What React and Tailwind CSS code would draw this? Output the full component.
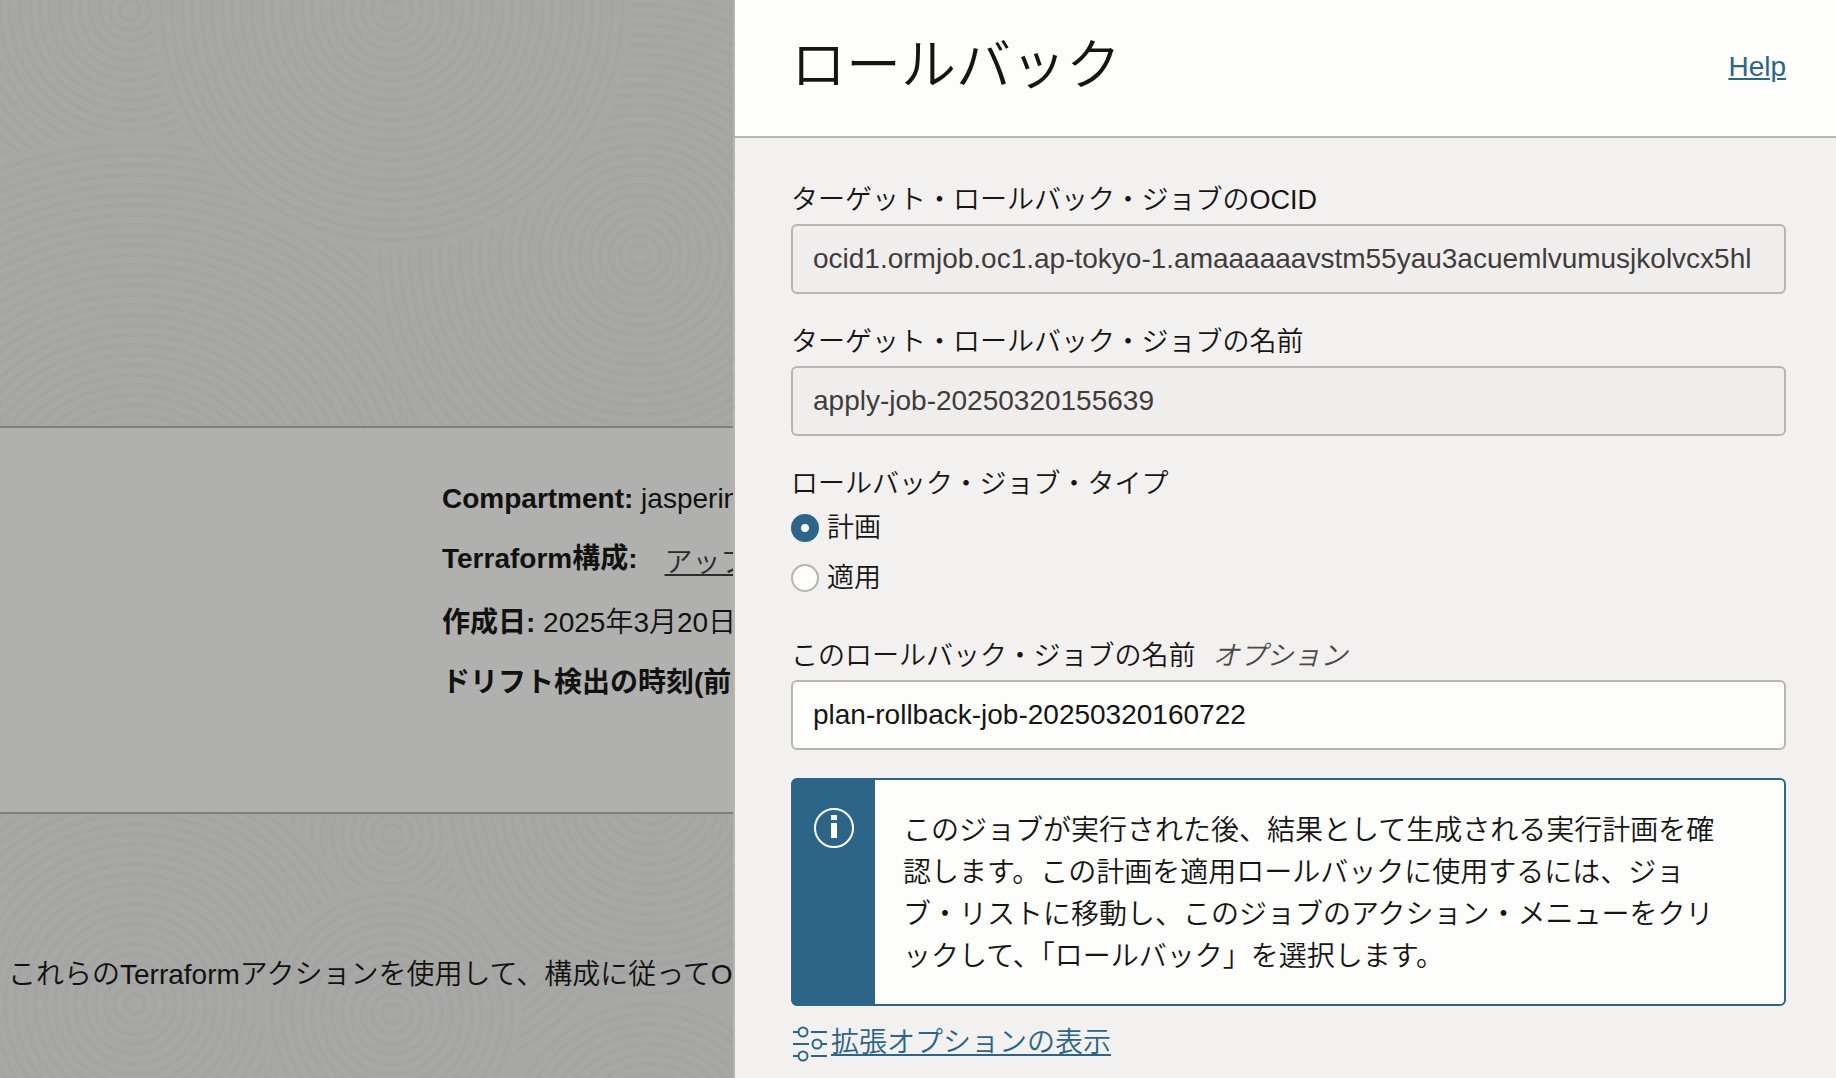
import { useState } from "react";

// Groups of concentric rings, painted back to front
const topRings = [
  { cx: -120, cy: 480, r: 400 },
  { cx: 130, cy: 10, r: 230 },
  { cx: 645, cy: 20, r: 230 },
  { cx: 135, cy: 525, r: 390 },
  { cx: 640, cy: 255, r: 270 },
  { cx: 392, cy: 10, r: 240 },
];

const bottomRings = [
  { cx: 392, cy: 20, r: 260 },
  { cx: 135, cy: 190, r: 240 },
  { cx: 650, cy: -20, r: 210 },
  { cx: 650, cy: 330, r: 150 },
  { cx: 392, cy: 200, r: 130 },
];

function RingTexture({ groups }) {
  return (
    <svg className="absolute inset-0 w-full h-full" aria-hidden="true">
      {groups.map((group, i) => (
        <g key={i} strokeWidth="4" stroke="#a4a4a3">
          <circle cx={group.cx} cy={group.cy} r={group.r} fill="#a7a7a5" stroke="none" />
          {Array.from({ length: Math.floor(group.r / 10) - 1 }, (_, n) => (
            <circle key={n} cx={group.cx} cy={group.cy} r={(n + 1) * 10} fill="none" />
          ))}
        </g>
      ))}
    </svg>
  );
}

function InfoIcon() {
  return (
    <svg width="40" height="40" viewBox="0 0 40 40" fill="none" aria-hidden="true">
      <circle cx="20" cy="20" r="19" stroke="#fff" strokeWidth="2" />
      <path d="M17 7h6v5h-6z M17 15h6v15h-6z" fill="#fff" />
    </svg>
  );
}

function SlidersIcon() {
  return (
    <svg width="36" height="38" viewBox="0 0 36 38" fill="none" stroke="#2c6587" strokeWidth="2" aria-hidden="true">
      <path d="M2 8h5M20 8h16M2 20h16M31 20h5M2 32h5M20 32h16" />
      <circle cx="12" cy="8" r="4.500" />
      <circle cx="26" cy="20" r="4.500" />
      <circle cx="12" cy="32" r="4.500" />
    </svg>
  );
}

function StackDetails() {
  return (
    <main className="min-w-0 overflow-hidden whitespace-nowrap flex flex-col bg-[#a7a7a5] text-[28px] leading-[36px] text-[#11110f]">
      <div className="relative h-[426px]">
        <RingTexture groups={topRings} />
      </div>
      <section className="border-y-2 border-[#7f7f7d] bg-[#b0b0ae] pl-[442px] pt-[49px] pb-[95px]">
        <p className="h-[60px] pt-1">
          <strong>Compartment:</strong> jasperin
        </p>
        <p className="h-[60px] pt-1 flex">
          <strong>Terraform構成:</strong>
          <a href="#config" className="ml-[27px] mt-1 text-[#2b2b2a] underline decoration-2 underline-offset-2">
            アップロード
          </a>
        </p>
        <p className="h-[64px] pt-2">
          <strong>作成日:</strong> 2025年3月20日
        </p>
        <p className="h-[56px] pt-1">
          <strong>ドリフト検出の時刻(前回)</strong>
        </p>
      </section>
      <div className="relative flex-1 pl-2 pt-[143px]">
        <RingTexture groups={bottomRings} />
        <p className="relative">これらのTerraformアクションを使用して、構成に従ってOCI</p>
      </div>
    </main>
  );
}

function Field({ id, label, optional, disabled, value, onChange }) {
  return (
    <div>
      <label htmlFor={id} className="block mb-[6px] text-[27px] leading-[36px]">
        {label}
        {optional && <em className="ml-[17px] text-[#4a4947]">オプション</em>}
      </label>
      <input
        id={id}
        type="text"
        disabled={disabled}
        value={value}
        onChange={onChange}
        className="block w-full h-[70px] px-5 rounded-md border-2 border-[#bab4af] bg-[#fdfdfc] text-[28px] disabled:bg-[#f0eeed] disabled:text-[#3e3d3b]"
      />
    </div>
  );
}

function RadioOption({ label, value, checked, onChange }) {
  return (
    <label className="flex items-center gap-2 text-[27px] leading-[36px]">
      <input
        type="radio"
        name="jobType"
        value={value}
        checked={checked}
        onChange={onChange}
        className="appearance-none w-7 h-7 rounded-full border-2 border-[#bab4af] bg-[#fdfdfc] checked:border-10 checked:border-[#2c6587]"
      />
      {label}
    </label>
  );
}

function RollbackPanel() {
  const [jobType, setJobType] = useState("plan");
  const [jobName, setJobName] = useState("plan-rollback-job-20250320160722");

  return (
    <aside className="min-w-0 border-l-2 border-[#bab4af] bg-[#f3f1f0] text-[#161513]">
      <header className="flex items-center justify-between h-[138px] pl-14 pr-[50px] pb-[2px] border-b-2 border-[#bab4af] bg-[#fdfdfc]">
        <h1 className="text-[55px] leading-[64px] pb-1 font-[350]">ロールバック</h1>
        <a href="#help" className="text-[28px] leading-[36px] text-[#2c6587] underline decoration-2 underline-offset-2">
          Help
        </a>
      </header>
      <form className="pl-14 pr-[50px] pt-11">
        <div className="flex flex-col gap-[30px]">
          <Field
            id="targetOcid"
            label="ターゲット・ロールバック・ジョブのOCID"
            disabled
            value="ocid1.ormjob.oc1.ap-tokyo-1.amaaaaaavstm55yau3acuemlvumusjkolvcx5hl"
          />
          <Field id="targetName" label="ターゲット・ロールバック・ジョブの名前" disabled value="apply-job-20250320155639" />
          <fieldset>
            <legend className="mb-2 text-[27px] leading-[36px]">ロールバック・ジョブ・タイプ</legend>
            <div className="flex flex-col gap-[14px]">
              <RadioOption label="計画" value="plan" checked={jobType === "plan"} onChange={() => setJobType("plan")} />
              <RadioOption label="適用" value="apply" checked={jobType === "apply"} onChange={() => setJobType("apply")} />
            </div>
          </fieldset>
        </div>
        <div className="mt-[42px]">
          <Field
            id="jobName"
            label="このロールバック・ジョブの名前"
            optional
            value={jobName}
            onChange={(e) => setJobName(e.target.value)}
          />
        </div>
        <div className="mt-7 flex rounded-md border-2 border-[#2c6587] bg-[#2c6587] overflow-hidden">
          <div className="w-[82px] shrink-0 flex justify-center pt-7">
            <InfoIcon />
          </div>
          <p className="flex-1 pt-[30px] pb-[26px] pl-7 pr-14 bg-[#fdfdfc] text-[28px] leading-[42px]">
            このジョブが実行された後、結果として生成される実行計画を確認します。この計画を適用ロールバックに使用するには、ジョブ・リストに移動し、このジョブのアクション・メニューをクリックして、「ロールバック」を選択します。
          </p>
        </div>
        <a href="#advanced" className="mt-[18px] w-fit flex items-center gap-1 text-[28px] leading-[36px] text-[#2c6587]">
          <SlidersIcon />
          <span className="underline decoration-2 underline-offset-2">拡張オプションの表示</span>
        </a>
      </form>
    </aside>
  );
}

export default function App() {
  return (
    <div
      lang="ja"
      className="min-h-screen overflow-hidden grid grid-cols-[733fr_1103fr] font-[350] font-['Liberation_Sans','Noto_Sans_CJK_JP',sans-serif]"
    >
      <StackDetails />
      <RollbackPanel />
    </div>
  );
}
